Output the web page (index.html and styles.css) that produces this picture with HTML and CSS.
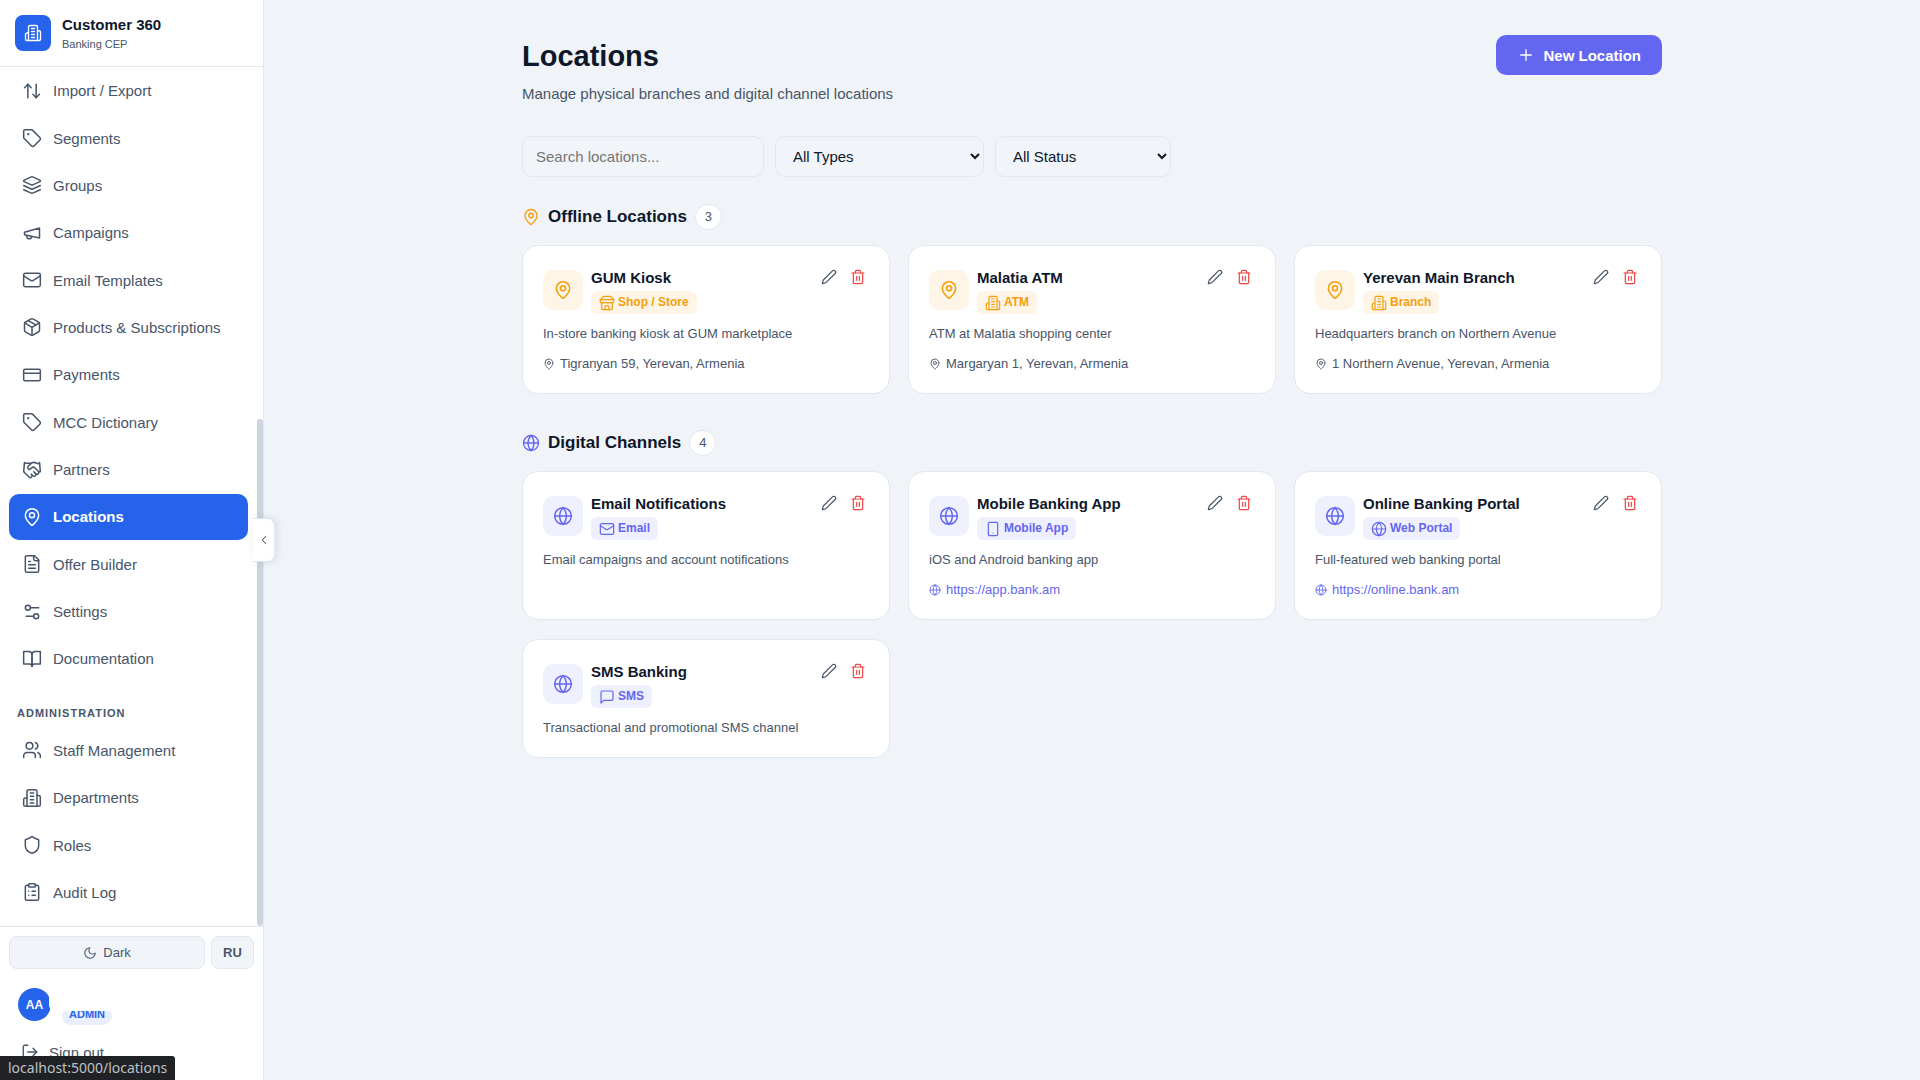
FILE: index.html
```
<!DOCTYPE html>
<html lang="en">
<head>
    <meta charset="UTF-8">
    <meta name="viewport" content="width=device-width, initial-scale=1.0">
    <title>Locations - Customer 360</title>
    <link rel="stylesheet" href="styles.css">
</head>
<body>

    <!-- Icon set -->
    <svg class="icon-set" aria-hidden="true">
        <symbol id="building" viewBox="0 0 24 24"><path d="M6 22V4a2 2 0 0 1 2-2h8a2 2 0 0 1 2 2v18Z"/><path d="M6 12H4a2 2 0 0 0-2 2v6a2 2 0 0 0 2 2h2"/><path d="M18 9h2a2 2 0 0 1 2 2v9a2 2 0 0 1-2 2h-2"/><path d="M10 6h4M10 10h4M10 14h4M10 18h4"/></symbol>
        <symbol id="arrows" viewBox="0 0 24 24"><path d="m21 16-4 4-4-4"/><path d="M17 20V4"/><path d="m3 8 4-4 4 4"/><path d="M7 4v16"/></symbol>
        <symbol id="tag" viewBox="0 0 24 24"><path d="M12.586 2.586A2 2 0 0 0 11.172 2H4a2 2 0 0 0-2 2v7.172a2 2 0 0 0 .586 1.414l8.704 8.704a2.426 2.426 0 0 0 3.42 0l6.58-6.58a2.426 2.426 0 0 0 0-3.42z"/><circle cx="7.5" cy="7.5" r=".5" fill="currentColor"/></symbol>
        <symbol id="layers" viewBox="0 0 24 24"><path d="M12.83 2.18a2 2 0 0 0-1.66 0L2.6 6.08a1 1 0 0 0 0 1.83l8.58 3.91a2 2 0 0 0 1.66 0l8.58-3.9a1 1 0 0 0 0-1.83Z"/><path d="m22 17.65-9.17 4.16a2 2 0 0 1-1.66 0L2 17.65"/><path d="m22 12.65-9.17 4.16a2 2 0 0 1-1.66 0L2 12.65"/></symbol>
        <symbol id="megaphone" viewBox="0 0 24 24"><path d="m3 11 18-5v12L3 14v-3z"/><path d="M11.6 16.8a3 3 0 1 1-5.8-1.6"/></symbol>
        <symbol id="mail" viewBox="0 0 24 24"><rect x="2" y="4" width="20" height="16" rx="2"/><path d="m22 7-8.97 5.7a1.94 1.94 0 0 1-2.06 0L2 7"/></symbol>
        <symbol id="package" viewBox="0 0 24 24"><path d="M11 21.73a2 2 0 0 0 2 0l7-4A2 2 0 0 0 21 16V8a2 2 0 0 0-1-1.73l-7-4a2 2 0 0 0-2 0l-7 4A2 2 0 0 0 3 8v8a2 2 0 0 0 1 1.73z"/><path d="M12 22V12"/><path d="m3.3 7 7.703 4.734a2 2 0 0 0 1.994 0L20.7 7"/><path d="m7.5 4.27 9 5.15"/></symbol>
        <symbol id="card" viewBox="0 0 24 24"><rect x="2" y="5" width="20" height="14" rx="2"/><path d="M2 10h20"/></symbol>
        <symbol id="handshake" viewBox="0 0 24 24"><path d="m11 17 2 2a1 1 0 1 0 3-3"/><path d="m14 14 2.5 2.5a1 1 0 1 0 3-3l-3.88-3.88a3 3 0 0 0-4.24 0l-.88.88a1 1 0 1 1-3-3l2.81-2.81a5.79 5.79 0 0 1 7.06-.87l.47.28a2 2 0 0 0 1.42.25L21 4"/><path d="m21 3 1 11h-2"/><path d="M3 3 2 14l6.5 6.5a1 1 0 1 0 3-3"/><path d="M3 4h8"/></symbol>
        <symbol id="pin" viewBox="0 0 24 24"><path d="M20 10c0 4.993-5.539 10.193-7.399 11.799a1 1 0 0 1-1.202 0C9.539 20.193 4 14.993 4 10a8 8 0 0 1 16 0"/><circle cx="12" cy="10" r="3"/></symbol>
        <symbol id="file" viewBox="0 0 24 24"><path d="M15 2H6a2 2 0 0 0-2 2v16a2 2 0 0 0 2 2h12a2 2 0 0 0 2-2V7Z"/><path d="M14 2v4a2 2 0 0 0 2 2h4"/><path d="M10 9H8M16 13H8M16 17H8"/></symbol>
        <symbol id="settings" viewBox="0 0 24 24"><path d="M20 7h-9M14 17H5"/><circle cx="17" cy="17" r="3"/><circle cx="7" cy="7" r="3"/></symbol>
        <symbol id="book" viewBox="0 0 24 24"><path d="M2 3h6a4 4 0 0 1 4 4v14a3 3 0 0 0-3-3H2z"/><path d="M22 3h-6a4 4 0 0 0-4 4v14a3 3 0 0 1 3-3h7z"/></symbol>
        <symbol id="users" viewBox="0 0 24 24"><path d="M16 21v-2a4 4 0 0 0-4-4H6a4 4 0 0 0-4 4v2"/><circle cx="9" cy="7" r="4"/><path d="M22 21v-2a4 4 0 0 0-3-3.87"/><path d="M16 3.13a4 4 0 0 1 0 7.75"/></symbol>
        <symbol id="shield" viewBox="0 0 24 24"><path d="M20 13c0 5-3.5 7.5-7.66 8.95a1 1 0 0 1-.67-.01C7.5 20.5 4 18 4 13V6a1 1 0 0 1 1-1c2 0 4.5-1.2 6.24-2.72a1.17 1.17 0 0 1 1.52 0C14.51 3.81 17 5 19 5a1 1 0 0 1 1 1z"/></symbol>
        <symbol id="clipboard" viewBox="0 0 24 24"><rect x="8" y="2" width="8" height="4" rx="1"/><path d="M16 4h2a2 2 0 0 1 2 2v14a2 2 0 0 1-2 2H6a2 2 0 0 1-2-2V6a2 2 0 0 1 2-2h2"/><path d="M12 11h4M12 16h4M8 11h.01M8 16h.01"/></symbol>
        <symbol id="moon" viewBox="0 0 24 24"><path d="M12 3a6 6 0 0 0 9 9 9 9 0 1 1-9-9Z"/></symbol>
        <symbol id="logout" viewBox="0 0 24 24"><path d="M9 21H5a2 2 0 0 1-2-2V5a2 2 0 0 1 2-2h4"/><path d="m16 17 5-5-5-5"/><path d="M21 12H9"/></symbol>
        <symbol id="chevron" viewBox="0 0 24 24"><path d="m15 18-6-6 6-6"/></symbol>
        <symbol id="plus" viewBox="0 0 24 24"><path d="M5 12h14M12 5v14"/></symbol>
        <symbol id="pencil" viewBox="0 0 24 24"><path d="M21.174 6.812a1 1 0 0 0-3.986-3.987L3.842 16.174a2 2 0 0 0-.5.83l-1.321 4.352a.5.5 0 0 0 .623.622l4.353-1.32a2 2 0 0 0 .83-.497z"/></symbol>
        <symbol id="trash" viewBox="0 0 24 24"><path d="M3 6h18"/><path d="M19 6v14a2 2 0 0 1-2 2H7a2 2 0 0 1-2-2V6"/><path d="M8 6V4a2 2 0 0 1 2-2h4a2 2 0 0 1 2 2v2"/><path d="M10 11v6M14 11v6"/></symbol>
        <symbol id="store" viewBox="0 0 24 24"><path d="m2 7 4.41-4.41A2 2 0 0 1 7.83 2h8.34a2 2 0 0 1 1.42.59L22 7"/><path d="M4 12v8a2 2 0 0 0 2 2h12a2 2 0 0 0 2-2v-8"/><path d="M15 22v-4a2 2 0 0 0-2-2h-2a2 2 0 0 0-2 2v4"/><path d="M2 7h20"/><path d="M22 7v3a2 2 0 0 1-2 2 2.7 2.7 0 0 1-1.59-.63.7.7 0 0 0-.82 0A2.7 2.7 0 0 1 16 12a2.7 2.7 0 0 1-1.59-.63.7.7 0 0 0-.82 0A2.7 2.7 0 0 1 12 12a2.7 2.7 0 0 1-1.59-.63.7.7 0 0 0-.82 0A2.7 2.7 0 0 1 8 12a2.7 2.7 0 0 1-1.59-.63.7.7 0 0 0-.82 0A2.7 2.7 0 0 1 4 12a2 2 0 0 1-2-2V7"/></symbol>
        <symbol id="globe" viewBox="0 0 24 24"><circle cx="12" cy="12" r="10"/><path d="M12 2a14.5 14.5 0 0 0 0 20 14.5 14.5 0 0 0 0-20"/><path d="M2 12h20"/></symbol>
        <symbol id="phone" viewBox="0 0 24 24"><rect x="5" y="2" width="14" height="20" rx="2"/><path d="M12 18h.01"/></symbol>
        <symbol id="message" viewBox="0 0 24 24"><path d="M21 15a2 2 0 0 1-2 2H7l-4 4V5a2 2 0 0 1 2-2h14a2 2 0 0 1 2 2z"/></symbol>
    </svg>

    <aside class="sidebar">
        <div class="brand">
            <div class="brand-logo"><svg class="icon icon-md"><use href="#building"/></svg></div>
            <div>
                <div class="brand-name">Customer 360</div>
                <div class="brand-sub">Banking CEP</div>
            </div>
        </div>

        <nav class="nav">
            <a class="nav-link" href="#"><svg class="icon icon-lg"><use href="#arrows"/></svg>Import / Export</a>
            <a class="nav-link" href="#"><svg class="icon icon-lg"><use href="#tag"/></svg>Segments</a>
            <a class="nav-link" href="#"><svg class="icon icon-lg"><use href="#layers"/></svg>Groups</a>
            <a class="nav-link" href="#"><svg class="icon icon-lg"><use href="#megaphone"/></svg>Campaigns</a>
            <a class="nav-link" href="#"><svg class="icon icon-lg"><use href="#mail"/></svg>Email Templates</a>
            <a class="nav-link" href="#"><svg class="icon icon-lg"><use href="#package"/></svg>Products &amp; Subscriptions</a>
            <a class="nav-link" href="#"><svg class="icon icon-lg"><use href="#card"/></svg>Payments</a>
            <a class="nav-link" href="#"><svg class="icon icon-lg"><use href="#tag"/></svg>MCC Dictionary</a>
            <a class="nav-link" href="#"><svg class="icon icon-lg"><use href="#handshake"/></svg>Partners</a>
            <a class="nav-link active" href="#"><svg class="icon icon-lg"><use href="#pin"/></svg>Locations</a>
            <a class="nav-link" href="#"><svg class="icon icon-lg"><use href="#file"/></svg>Offer Builder</a>
            <a class="nav-link" href="#"><svg class="icon icon-lg"><use href="#settings"/></svg>Settings</a>
            <a class="nav-link" href="#"><svg class="icon icon-lg"><use href="#book"/></svg>Documentation</a>
            <div class="nav-heading">ADMINISTRATION</div>
            <a class="nav-link" href="#"><svg class="icon icon-lg"><use href="#users"/></svg>Staff Management</a>
            <a class="nav-link" href="#"><svg class="icon icon-lg"><use href="#building"/></svg>Departments</a>
            <a class="nav-link" href="#"><svg class="icon icon-lg"><use href="#shield"/></svg>Roles</a>
            <a class="nav-link" href="#"><svg class="icon icon-lg"><use href="#clipboard"/></svg>Audit Log</a>
            <div class="nav-scroll"></div>
        </nav>

        <div class="sidebar-footer">
            <div class="toggles">
                <button class="toggle toggle-theme"><svg class="icon icon-xs"><use href="#moon"/></svg>Dark</button>
                <button class="toggle toggle-lang">RU</button>
            </div>
            <div class="user">
                <div class="avatar">AA</div>
                <span class="role">ADMIN</span>
                <div class="user-cover"></div>
            </div>
            <button class="sign-out"><svg class="icon icon-md"><use href="#logout"/></svg>Sign out</button>
        </div>

        <button class="collapse" aria-label="Collapse sidebar"><svg class="icon icon-xs"><use href="#chevron"/></svg></button>
    </aside>

    <main class="main">
        <div class="page">
            <header class="page-header">
                <div>
                    <h1>Locations</h1>
                    <p class="page-sub">Manage physical branches and digital channel locations</p>
                </div>
                <button class="new-btn"><svg class="icon icon-md"><use href="#plus"/></svg>New Location</button>
            </header>

            <div class="filters">
                <input class="field search" type="text" placeholder="Search locations..." aria-label="Search locations">
                <select class="field types" aria-label="Type">
                    <option>All Types</option>
                </select>
                <select class="field status" aria-label="Status">
                    <option>All Status</option>
                </select>
            </div>

            <section class="group offline">
                <div class="group-header">
                    <svg class="icon icon-md"><use href="#pin"/></svg>
                    <h2>Offline Locations</h2>
                    <span class="count">3</span>
                </div>
                <div class="cards">
                    <article class="card">
                        <div class="card-head">
                            <div class="card-icon"><svg class="icon icon-lg"><use href="#pin"/></svg></div>
                            <div class="card-title">
                                <h3>GUM Kiosk</h3>
                                <span class="type"><svg class="icon icon-sm"><use href="#store"/></svg>Shop / Store</span>
                            </div>
                            <div class="actions">
                                <button class="action" aria-label="Edit"><svg class="icon icon-sm"><use href="#pencil"/></svg></button>
                                <button class="action delete" aria-label="Delete"><svg class="icon icon-sm"><use href="#trash"/></svg></button>
                            </div>
                        </div>
                        <p class="desc">In-store banking kiosk at GUM marketplace</p>
                        <p class="place"><svg class="icon icon-tiny"><use href="#pin"/></svg>Tigranyan 59, Yerevan, Armenia</p>
                    </article>
                    <article class="card">
                        <div class="card-head">
                            <div class="card-icon"><svg class="icon icon-lg"><use href="#pin"/></svg></div>
                            <div class="card-title">
                                <h3>Malatia ATM</h3>
                                <span class="type"><svg class="icon icon-sm"><use href="#building"/></svg>ATM</span>
                            </div>
                            <div class="actions">
                                <button class="action" aria-label="Edit"><svg class="icon icon-sm"><use href="#pencil"/></svg></button>
                                <button class="action delete" aria-label="Delete"><svg class="icon icon-sm"><use href="#trash"/></svg></button>
                            </div>
                        </div>
                        <p class="desc">ATM at Malatia shopping center</p>
                        <p class="place"><svg class="icon icon-tiny"><use href="#pin"/></svg>Margaryan 1, Yerevan, Armenia</p>
                    </article>
                    <article class="card">
                        <div class="card-head">
                            <div class="card-icon"><svg class="icon icon-lg"><use href="#pin"/></svg></div>
                            <div class="card-title">
                                <h3>Yerevan Main Branch</h3>
                                <span class="type"><svg class="icon icon-sm"><use href="#building"/></svg>Branch</span>
                            </div>
                            <div class="actions">
                                <button class="action" aria-label="Edit"><svg class="icon icon-sm"><use href="#pencil"/></svg></button>
                                <button class="action delete" aria-label="Delete"><svg class="icon icon-sm"><use href="#trash"/></svg></button>
                            </div>
                        </div>
                        <p class="desc">Headquarters branch on Northern Avenue</p>
                        <p class="place"><svg class="icon icon-tiny"><use href="#pin"/></svg>1 Northern Avenue, Yerevan, Armenia</p>
                    </article>
                </div>
            </section>

            <section class="group digital">
                <div class="group-header">
                    <svg class="icon icon-md"><use href="#globe"/></svg>
                    <h2>Digital Channels</h2>
                    <span class="count">4</span>
                </div>
                <div class="cards">
                    <article class="card">
                        <div class="card-head">
                            <div class="card-icon"><svg class="icon icon-lg"><use href="#globe"/></svg></div>
                            <div class="card-title">
                                <h3>Email Notifications</h3>
                                <span class="type"><svg class="icon icon-sm"><use href="#mail"/></svg>Email</span>
                            </div>
                            <div class="actions">
                                <button class="action" aria-label="Edit"><svg class="icon icon-sm"><use href="#pencil"/></svg></button>
                                <button class="action delete" aria-label="Delete"><svg class="icon icon-sm"><use href="#trash"/></svg></button>
                            </div>
                        </div>
                        <p class="desc">Email campaigns and account notifications</p>
                    </article>
                    <article class="card">
                        <div class="card-head">
                            <div class="card-icon"><svg class="icon icon-lg"><use href="#globe"/></svg></div>
                            <div class="card-title">
                                <h3>Mobile Banking App</h3>
                                <span class="type"><svg class="icon icon-sm"><use href="#phone"/></svg>Mobile App</span>
                            </div>
                            <div class="actions">
                                <button class="action" aria-label="Edit"><svg class="icon icon-sm"><use href="#pencil"/></svg></button>
                                <button class="action delete" aria-label="Delete"><svg class="icon icon-sm"><use href="#trash"/></svg></button>
                            </div>
                        </div>
                        <p class="desc">iOS and Android banking app</p>
                        <a class="place" href="#"><svg class="icon icon-tiny"><use href="#globe"/></svg>https://app.bank.am</a>
                    </article>
                    <article class="card">
                        <div class="card-head">
                            <div class="card-icon"><svg class="icon icon-lg"><use href="#globe"/></svg></div>
                            <div class="card-title">
                                <h3>Online Banking Portal</h3>
                                <span class="type"><svg class="icon icon-sm"><use href="#globe"/></svg>Web Portal</span>
                            </div>
                            <div class="actions">
                                <button class="action" aria-label="Edit"><svg class="icon icon-sm"><use href="#pencil"/></svg></button>
                                <button class="action delete" aria-label="Delete"><svg class="icon icon-sm"><use href="#trash"/></svg></button>
                            </div>
                        </div>
                        <p class="desc">Full-featured web banking portal</p>
                        <a class="place" href="#"><svg class="icon icon-tiny"><use href="#globe"/></svg>https://online.bank.am</a>
                    </article>
                    <article class="card">
                        <div class="card-head">
                            <div class="card-icon"><svg class="icon icon-lg"><use href="#globe"/></svg></div>
                            <div class="card-title">
                                <h3>SMS Banking</h3>
                                <span class="type"><svg class="icon icon-sm"><use href="#message"/></svg>SMS</span>
                            </div>
                            <div class="actions">
                                <button class="action" aria-label="Edit"><svg class="icon icon-sm"><use href="#pencil"/></svg></button>
                                <button class="action delete" aria-label="Delete"><svg class="icon icon-sm"><use href="#trash"/></svg></button>
                            </div>
                        </div>
                        <p class="desc">Transactional and promotional SMS channel</p>
                    </article>
                </div>
            </section>
        </div>
    </main>

    <div class="status-bar">localhost:5000/locations</div>

</body>
</html>
```
FILE: styles.css
```
* { box-sizing: border-box; }
body { margin: 0; display: flex; height: 100vh; overflow: hidden; font-family: "Liberation Sans", Arial, sans-serif; font-size: 15px; color: #0f172a; background: #f0f4f8; }
h1, h2, h3, p { margin: 0; }
a { text-decoration: none; }
button, input, select { font-family: inherit; }
button { cursor: pointer; }

.icon-set { display: none; }
.icon { flex: none; display: block; fill: none; stroke: currentColor; stroke-width: 1.8; stroke-linecap: round; stroke-linejoin: round; }
.icon-tiny { width: 12px; height: 12px; }
.icon-xs { width: 14px; height: 14px; }
.icon-sm { width: 16px; height: 16px; }
.icon-md { width: 18px; height: 18px; }
.icon-lg { width: 20px; height: 20px; }

/* Sidebar */
.sidebar { position: relative; flex: none; width: 264px; display: flex; flex-direction: column; background: #fff; border-right: 1px solid #e2e8f0; color: #475569; }
.brand { display: flex; align-items: center; gap: 11px; height: 67px; padding: 0 15px; border-bottom: 1px solid #e2e8f0; }
.brand-logo { display: flex; align-items: center; justify-content: center; width: 36px; height: 36px; border-radius: 8px; background: #2563eb; color: #fff; }
.brand-name { padding-top: 2px; font-weight: bold; line-height: 20px; color: #0f172a; }
.brand-sub { font-size: 11px; line-height: 18px; }

.nav { position: relative; flex: 1; min-height: 0; display: flex; flex-direction: column; gap: 2px; padding: 1px 15px 11px 9px; overflow: hidden; }
.nav-link { flex: 1; display: flex; align-items: center; gap: 11px; padding: 0 13px; border-radius: 10px; color: #475569; }
.nav-link.active { background: #2563eb; color: #fff; font-weight: bold; }
.nav-heading { padding: 21px 8px 5px; font-size: 11px; line-height: 16px; font-weight: bold; letter-spacing: 1px; }
.nav-scroll { position: absolute; right: 0; bottom: 0; width: 6px; height: 59%; border-radius: 3px; background: #cbd5e1; }

.sidebar-footer { padding: 9px 9px 6px; border-top: 1px solid #e2e8f0; }
.toggles { display: flex; gap: 6px; }
.toggle { display: flex; align-items: center; justify-content: center; gap: 6px; height: 33px; border: 1px solid #e2e8f0; border-radius: 8px; background: #f1f5f9; color: #475569; font-size: 13px; }
.toggle-theme { flex: 1; }
.toggle-lang { width: 43px; font-weight: bold; }
.user { position: relative; display: flex; align-items: flex-start; gap: 11px; height: 51px; margin-top: 10px; padding: 9px 9px 5px; }
.avatar { display: flex; align-items: center; justify-content: center; width: 33px; height: 33px; border-radius: 50%; background: #2563eb; color: #fff; font-size: 12px; font-weight: bold; }
.role { align-self: flex-end; padding: 0 7px 3px; border-radius: 10px; background: #e9effd; color: #2563eb; font-size: 11px; line-height: 15px; font-weight: bold; }
.user-cover { position: absolute; top: 4px; left: 40px; right: 0; height: 28px; border-radius: 6px; background: #fff; }
.sign-out { display: flex; align-items: center; gap: 10px; width: 100%; height: 44px; padding: 0 12px; border: 0; background: none; color: #475569; font-size: 15px; }
.collapse { position: absolute; top: 518px; right: -12px; display: flex; align-items: center; justify-content: center; width: 22px; height: 44px; padding: 0; border: 1px solid #e2e8f0; border-left: 0; border-radius: 0 8px 8px 0; background: #fff; color: #475569; box-shadow: 2px 0 8px rgba(15, 23, 42, 0.1); }

/* Page */
.main { flex: 1; overflow: auto; padding: 35px 30px; }
.page { max-width: 1140px; margin: 0 auto; }
.page-header { display: flex; justify-content: space-between; align-items: flex-start; margin-bottom: 30px; }
h1 { font-size: 29px; line-height: 42px; }
.page-sub { margin-top: 4px; line-height: 25px; color: #475569; }
.new-btn { display: flex; align-items: center; gap: 8px; height: 40px; padding: 0 21px; border: 0; border-radius: 10px; background: #6366f1; color: #fff; font-size: 15px; font-weight: bold; }

.filters { display: flex; gap: 11px; margin-bottom: 27px; }
.field { height: 41px; padding: 0 13px; border: 1px solid #e2e8f0; border-radius: 10px; background: #f1f5f9; color: #0f172a; font-size: 15px; }
.search { width: 242px; }
.types { width: 209px; }
.status { width: 176px; }

.group { margin-bottom: 36px; }
.group-header { display: flex; align-items: center; gap: 8px; margin-bottom: 15px; }
h2 { font-size: 17px; line-height: 26px; }
.count { padding: 0 9px; border: 1px solid #e2e8f0; border-radius: 13px; background: #fff; color: #475569; font-size: 13px; line-height: 24px; }
.offline .group-header .icon, .offline .card-icon, .offline .type { color: #f59e0b; }
.digital .group-header .icon, .digital .card-icon, .digital .type { color: #6366f1; }
.offline .card-icon, .offline .type { background: #fef5e7; }
.digital .card-icon, .digital .type { background: #eff0fe; }

.cards { display: grid; grid-template-columns: repeat(3, 1fr); gap: 19px 18px; }
.card { padding: 20px; border: 1px solid #e2e8f0; border-radius: 16px; background: #fff; }
.card-head { display: flex; align-items: center; gap: 8px; }
.card-icon { display: flex; align-items: center; justify-content: center; width: 40px; height: 40px; border-radius: 10px; }
.card-title { flex: 1; display: flex; flex-direction: column; align-items: flex-start; gap: 2px; }
h3 { font-size: 15px; line-height: 23px; }
.type { display: flex; align-items: center; gap: 3px; padding: 0 8px; border-radius: 6px; font-size: 12px; line-height: 23px; font-weight: bold; }
.actions { align-self: flex-start; display: flex; gap: 7px; }
.action { padding: 3px; border: 0; background: none; color: #475569; }
.action.delete { color: #ef4444; }
.desc { margin-top: 10px; font-size: 13px; line-height: 19px; color: #475569; }
.place { display: flex; align-items: center; gap: 5px; margin-top: 11px; font-size: 13px; line-height: 19px; color: #475569; }
a.place { color: #6366f1; }

.status-bar { position: fixed; left: 0; bottom: 0; padding: 0 8px; border-radius: 0 3px 0 0; background: #202124; color: #bdc1c6; font-family: "Noto Sans", sans-serif; font-size: 14px; line-height: 24px; }
```
